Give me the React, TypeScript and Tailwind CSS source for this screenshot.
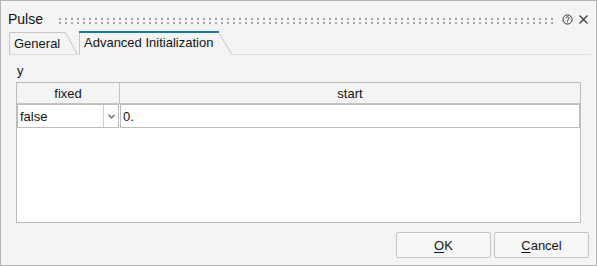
import React from "react";

const font = "font-['Liberation_Sans',Arial,sans-serif]";

const Grip = () => (
  <svg width="494" height="6" className="block">
    <defs>
      <pattern id="dots" width="6" height="4" patternUnits="userSpaceOnUse">
        <rect x="0" y="0" width="2" height="2" fill="#a4a4a4" />
      </pattern>
    </defs>
    <rect x="0" y="0" width="494" height="6" fill="url(#dots)" />
  </svg>
);

const HelpIcon = () => (
  <svg width="11" height="11" viewBox="0 0 11 11" className="block">
    <circle cx="5.5" cy="5.5" r="4.6" fill="none" stroke="#333" strokeWidth="1" />
    <path
      d="M4 4.4 a1.5 1.5 0 1 1 2.3 1.2 c-0.5 0.3 -0.8 0.6 -0.8 1.2"
      fill="none"
      stroke="#333"
      strokeWidth="1"
    />
    <rect x="5" y="7.6" width="1" height="1" fill="#333" />
  </svg>
);

const CloseIcon = () => (
  <svg width="9" height="9" viewBox="0 0 9 9" className="block">
    <path d="M0.5 0.5 L8.5 8.5 M8.5 0.5 L0.5 8.5" stroke="#333" strokeWidth="1.1" />
  </svg>
);

const Chevron = () => (
  <svg width="7" height="5" viewBox="0 0 7 5" className="block">
    <path d="M0.5 0.8 L3.5 3.8 L6.5 0.8" fill="none" stroke="#7c7c7c" strokeWidth="1.6" />
  </svg>
);

const Tabs = () => (
  <div className="flex items-end h-[24px] pl-[8px] pr-[5px]">
    <div className="relative w-[69px] h-[23px] pl-[5px] pt-[4px] leading-[15px]">
      <svg width="69" height="23" className="absolute left-0 top-0">
        <path d="M0.5 23 V0.5 H56.5 L68.5 22.5" fill="none" stroke="#c6c6c6" />
        <path d="M0 22.5 H69" stroke="#dcdcdc" />
      </svg>
      <span className="relative">General</span>
    </div>
    <div className="relative ml-[1px] w-[154px] h-[24px] pl-[5px] pt-[4px] leading-[15px]">
      <svg width="154" height="24" className="absolute left-0 top-0">
        <rect x="0" y="0" width="140" height="2" fill="#1a79ad" />
        <path d="M0.5 2 V24" stroke="#c6c6c6" />
        <path d="M140 2 L153 23.5" fill="none" stroke="#c6c6c6" />
      </svg>
      <span className="relative">Advanced Initialization</span>
    </div>
    <div className="flex-1 h-[1px] bg-[#dedede]" />
  </div>
);

export default function App() {
  return (
    <div
      className={`${font} w-[597px] h-[266px] border border-[#b4b4b4] bg-[#f4f4f4] text-[13px] text-[#141414] flex flex-col`}
    >
      <div className="mt-[10px] h-[16px] flex items-center pl-[7px]">
        <span className="text-[14px] leading-[16px] w-[51px]">Pulse</span>
        <div className="mt-[4px]">
          <Grip />
        </div>
        <div className="ml-[9px]">
          <HelpIcon />
        </div>
        <div className="ml-[6px]">
          <CloseIcon />
        </div>
      </div>

      <div className="mt-[4px]">
        <Tabs />
      </div>

      <div className="px-[15px]">
        <div className="mt-[8px] pl-[1px] leading-[15px]">y</div>
        <div className="mt-[4px] h-[141px] border border-[#bcbcbc] bg-white flex flex-col">
          <div className="flex h-[21px] bg-[#f4f4f4] border-b border-[#c4c4c4] leading-[15px]">
            <div className="w-[103px] border-r border-[#c4c4c4] flex items-center justify-center">
              fixed
            </div>
            <div className="flex-1 flex items-center justify-center">start</div>
          </div>
          <div className="flex h-[24px] leading-[15px]">
            <div className="w-[102px] border border-[#bdbdbd] bg-white flex">
              <div className="flex-1 pl-[2px] flex items-center">false</div>
              <div className="w-[15px] border-l border-[#d0d0d0] flex items-center justify-center">
                <Chevron />
              </div>
            </div>
            <div className="flex-1 ml-[1px] border border-[#bdbdbd] bg-white pl-[2px] flex items-center">
              0.
            </div>
          </div>
        </div>
      </div>

      <div className="mt-[9px] flex justify-end gap-[3px] pr-[7px]">
        <button className="w-[95px] h-[26px] border border-[#c4c4c4] rounded-[2px] bg-[#f7f7f7] leading-[15px]">
          <span className="underline underline-offset-[2px]">O</span>K
        </button>
        <button className="w-[95px] h-[26px] border border-[#c4c4c4] rounded-[2px] bg-[#f7f7f7] leading-[15px]">
          <span className="underline underline-offset-[2px]">C</span>ancel
        </button>
      </div>
    </div>
  );
}
